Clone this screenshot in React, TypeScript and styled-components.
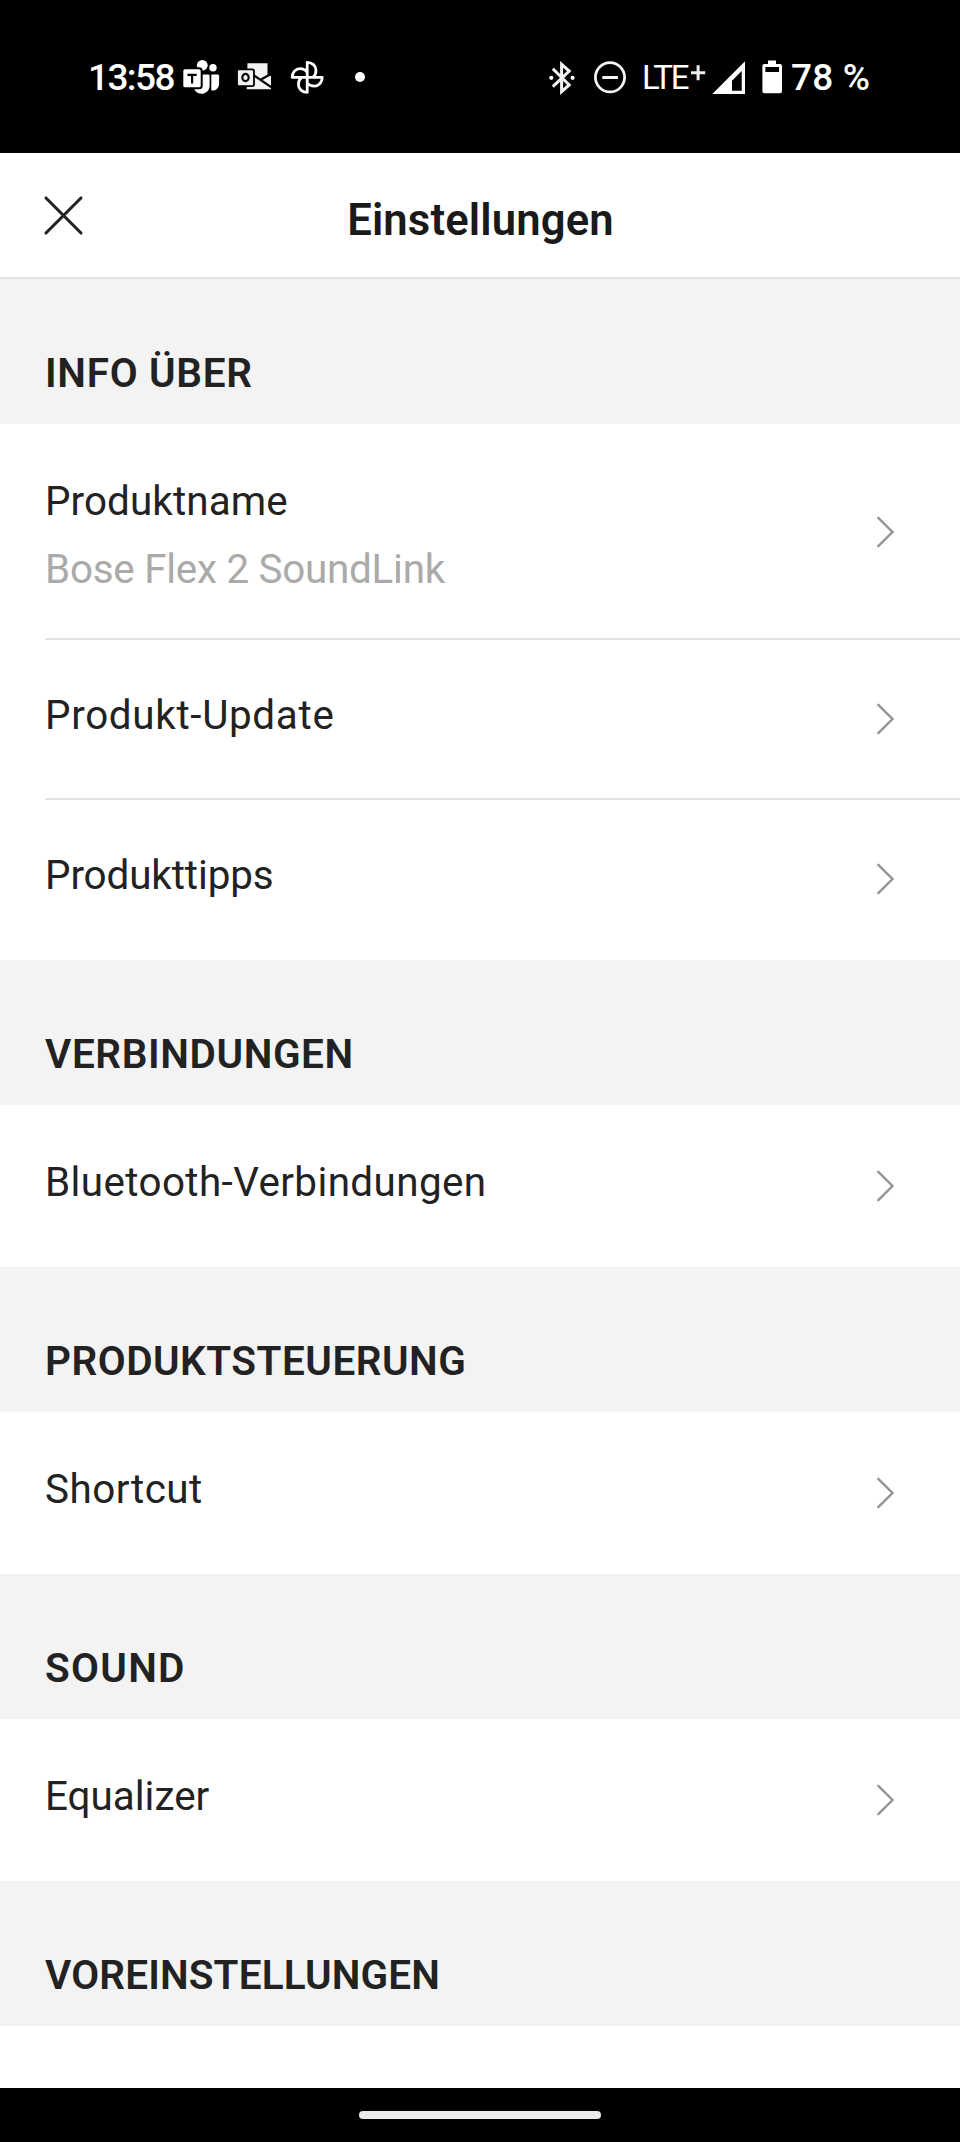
import React from "react";
import styled, { createGlobalStyle } from "styled-components";

const GlobalStyle = createGlobalStyle`
  *, *::before, *::after { box-sizing: border-box; }
  body {
    margin: 0;
    background: #fff;
    font-family: Roboto, "Liberation Sans", sans-serif;
    color: #222;
  }
  svg { display: block; flex: none; }
`;

const Screen = styled.div`
  display: flex;
  flex-direction: column;
  width: 960px;
  height: 2142px;
  background: #fff;
  overflow: hidden;
`;

const StatusBar = styled.div`
  display: flex;
  justify-content: space-between;
  flex: none;
  height: 153px;
  padding: 57px 88px 0;
  background: #000;
  color: #fff;
`;

const StatusGroup = styled.div`
  display: flex;
  height: 40px;
`;

const Slot = styled.div<{ $before?: number }>`
  flex: none;
  margin-left: ${(p) => p.$before ?? 0}px;
`;

const StatusText = styled.div<{ $width: number; $size?: number; $weight?: number; $tracking?: number; $before?: number }>`
  flex: none;
  width: ${(p) => p.$width}px;
  margin-left: ${(p) => p.$before ?? 0}px;
  font-size: ${(p) => p.$size ?? 37}px;
  font-weight: ${(p) => p.$weight ?? 500};
  letter-spacing: ${(p) => p.$tracking ?? 0}px;
  line-height: 41px;
  white-space: nowrap;
`;

const Header = styled.header`
  display: grid;
  grid-template-columns: 45px 1fr 45px;
  align-items: center;
  flex: none;
  height: 126px;
  padding: 0 41px;
  border-bottom: 2px solid #e4e4e4;
`;

const CloseButton = styled.button`
  padding: 0;
  border: 0;
  background: none;
`;

const Title = styled.h1`
  margin: 11px 0 0 1px;
  font-size: 43.6px;
  font-weight: 600;
  letter-spacing: 0.15px;
  line-height: 50px;
  text-align: center;
  color: #1a1a1a;
`;

const SectionTitle = styled.h2<{ $tracking: number }>`
  flex: none;
  height: 145px;
  margin: 0;
  padding: 70px 45px 0;
  background: #f3f3f3;
  font-size: 40.5px;
  font-weight: 600;
  letter-spacing: ${(p) => p.$tracking}px;
  line-height: 48px;
`;

const List = styled.div`
  flex: none;
  padding: 2px 0 2px 45px;
  background: #fff;
`;

const Row = styled.div<{ $tall?: boolean }>`
  display: flex;
  align-items: center;
  justify-content: space-between;
  height: ${(p) => (p.$tall ? 212 : 158)}px;
  padding-right: 65px;

  & + & {
    height: 160px;
    border-top: 2px solid #e4e4e4;
  }
`;

const RowText = styled.div<{ $tall?: boolean }>`
  display: flex;
  flex-direction: column;
  gap: 20px;
  padding: ${(p) => (p.$tall ? "8px 0 0" : "0 0 6px")};
`;

const Label = styled.div<{ $tracking: number; $muted?: boolean }>`
  font-size: 40.4px;
  font-weight: 400;
  letter-spacing: ${(p) => p.$tracking}px;
  line-height: 48px;
  white-space: nowrap;
  color: ${(p) => (p.$muted ? "#aaa" : "#222")};
`;

const ListEnd = styled.div`
  flex: 1;
`;

const NavBar = styled.div`
  display: flex;
  justify-content: center;
  flex: none;
  height: 54px;
  padding-top: 23px;
  background: #000;
`;

const HomeHandle = styled.div`
  width: 242px;
  height: 8px;
  border-radius: 4px;
  background: #ebebeb;
`;

const TeamsIcon = () => (
  <svg width="42" height="40" viewBox="180 57 42 40" fill="#fff">
    <circle cx="202.3" cy="65.3" r="5.4" />
    <circle cx="213" cy="67.8" r="3.7" />
    <path d="M211.3 74.5h6.4a1.4 1.4 0 0 1 1.4 1.4v8.4a6.3 6.3 0 0 1-7.8 6z" />
    <path d="M196 74.5h12.2a1.4 1.4 0 0 1 1.4 1.4v9.6a8.2 8.2 0 0 1-13.6 6.2a8 8 0 0 1-2-3z" />
    <rect x="182.3" y="68.3" width="19.4" height="20" rx="2.6" stroke="#000" strokeWidth="2" />
    <path d="M187.5 74.8h9.2M192.1 74.8v8.8" stroke="#000" strokeWidth="2.2" fill="none" />
  </svg>
);

const OutlookIcon = () => (
  <svg width="38" height="40" viewBox="235 57 38 40">
    <path d="M247.5 63.3h20v12.5h3.5v13.5h-24.3z" fill="#f2f2f2" />
    <path d="M254 75.5l17.5 11.8M260.5 79.8l11-6" stroke="#000" strokeWidth="2.2" fill="none" />
    <rect x="237" y="69.3" width="17" height="16.8" rx="1.8" fill="#f2f2f2" stroke="#000" strokeWidth="1.8" />
    <ellipse cx="245.5" cy="77.5" rx="3.2" ry="3.7" fill="none" stroke="#111" strokeWidth="2.2" />
  </svg>
);

const BLADE = "M0 0V-15C5 -15 8.8 -11.6 8.8 -7.2C8.8 -4 7.6 -1.6 5.6 0";

const PinwheelIcon = () => (
  <svg width="36" height="40" viewBox="289 57 36 40">
    <g transform="translate(307.2 77.4)" fill="none" stroke="#fff" strokeWidth="2.8" strokeLinejoin="round">
      {[0, 90, 180, 270].map((angle) => (
        <path key={angle} d={BLADE} transform={`rotate(${angle})`} />
      ))}
    </g>
  </svg>
);

const MoreDot = () => (
  <svg width="14" height="40" viewBox="353 57 14 40">
    <circle cx="360" cy="77" r="5" fill="#fff" />
  </svg>
);

const BluetoothIcon = () => (
  <svg width="30" height="40" viewBox="547 57 30 40">
    <path d="M552.8 68.8l16.4 16.2-7.6 6.6V64.4l7.6 6.6-16.4 15.6" fill="none" stroke="#f4f4f4" strokeWidth="3" />
    <circle cx="551.3" cy="77.8" r="2.1" fill="#fff" />
    <circle cx="572.6" cy="77.8" r="2.1" fill="#fff" />
  </svg>
);

const DoNotDisturbIcon = () => (
  <svg width="36" height="40" viewBox="592 57 36 40" fill="none" stroke="#f4f4f4">
    <circle cx="610" cy="77.3" r="14.6" strokeWidth="2.8" />
    <path d="M602.3 77.5h15.6" strokeWidth="3" />
  </svg>
);

const PlusIcon = () => (
  <svg width="18" height="40" viewBox="689 57 18 40">
    <path d="M691 72.7h14.2M698.1 65.2v15" stroke="#eee" strokeWidth="3" />
  </svg>
);

const SignalIcon = () => (
  <svg width="37" height="40" viewBox="710 57 37 40">
    <path d="M712.3 94L745 61.3V94zM732 90.7h9.7V71l-9.7 9.7z" fill="#fff" fillRule="evenodd" />
  </svg>
);

const BatteryIcon = () => (
  <svg width="24" height="40" viewBox="760 57 24 40">
    <path
      d="M768 60.5h8v3.6h4a2 2 0 0 1 2 2v25.2a2 2 0 0 1-2 2h-15.6a2 2 0 0 1-2-2V66.1a2 2 0 0 1 2-2h3.6zM765.4 67v5h13.6v-5z"
      fill="#fff"
      fillRule="evenodd"
    />
  </svg>
);

const CloseIcon = () => (
  <svg width="45" height="45" viewBox="0 0 45 45" fill="none" stroke="#222" strokeWidth="3.1" strokeLinecap="round">
    <path d="M5 5l35 35M40 5L5 40" />
  </svg>
);

const Chevron = () => (
  <svg width="20" height="32" viewBox="0 0 20 32" fill="none" stroke="#949494" strokeWidth="2.4" strokeLinecap="round">
    <path d="M3.3 1.8L17.5 16L3.3 30.2" />
  </svg>
);

type Text = { text: string; tracking: number };
type Item = Text & { value?: Text };
type Section = { title: Text; items: Item[] };

const SECTIONS: Section[] = [
  {
    title: { text: "INFO ÜBER", tracking: 0.7 },
    items: [
      { text: "Produktname", tracking: 0.1, value: { text: "Bose Flex 2 SoundLink", tracking: -0.27 } },
      { text: "Produkt-Update", tracking: 0.68 },
      { text: "Produkttipps", tracking: -0.1 },
    ],
  },
  { title: { text: "VERBINDUNGEN", tracking: 0.6 }, items: [{ text: "Bluetooth-Verbindungen", tracking: 0.4 }] },
  { title: { text: "PRODUKTSTEUERUNG", tracking: 0.5 }, items: [{ text: "Shortcut", tracking: 0.5 }] },
  { title: { text: "SOUND", tracking: 1.3 }, items: [{ text: "Equalizer", tracking: 0 }] },
  { title: { text: "VOREINSTELLUNGEN", tracking: 0.15 }, items: [] },
];

export default function App() {
  return (
    <Screen>
      <GlobalStyle />
      <StatusBar>
        <StatusGroup>
          <StatusText $width={92} $tracking={-1.6}>13:58</StatusText>
          <TeamsIcon />
          <Slot $before={13}><OutlookIcon /></Slot>
          <Slot $before={16}><PinwheelIcon /></Slot>
          <Slot $before={28}><MoreDot /></Slot>
        </StatusGroup>
        <StatusGroup>
          <BluetoothIcon />
          <Slot $before={15}><DoNotDisturbIcon /></Slot>
          <StatusText $width={47} $before={14} $size={33} $weight={400} $tracking={-2.2}>LTE</StatusText>
          <PlusIcon />
          <Slot $before={3}><SignalIcon /></Slot>
          <Slot $before={13}><BatteryIcon /></Slot>
          <StatusText $width={81} $before={7} $tracking={0.2}>78 %</StatusText>
        </StatusGroup>
      </StatusBar>
      <Header>
        <CloseButton aria-label="Schließen"><CloseIcon /></CloseButton>
        <Title>Einstellungen</Title>
      </Header>
      {SECTIONS.map(({ title, items }) => (
        <React.Fragment key={title.text}>
          <SectionTitle $tracking={title.tracking}>{title.text}</SectionTitle>
          {items.length > 0 && (
            <List>
              {items.map((item) => (
                <Row key={item.text} $tall={!!item.value}>
                  <RowText $tall={!!item.value}>
                    <Label $tracking={item.tracking}>{item.text}</Label>
                    {item.value && (
                      <Label $tracking={item.value.tracking} $muted>{item.value.text}</Label>
                    )}
                  </RowText>
                  <Chevron />
                </Row>
              ))}
            </List>
          )}
        </React.Fragment>
      ))}
      <ListEnd />
      <NavBar><HomeHandle /></NavBar>
    </Screen>
  );
}
